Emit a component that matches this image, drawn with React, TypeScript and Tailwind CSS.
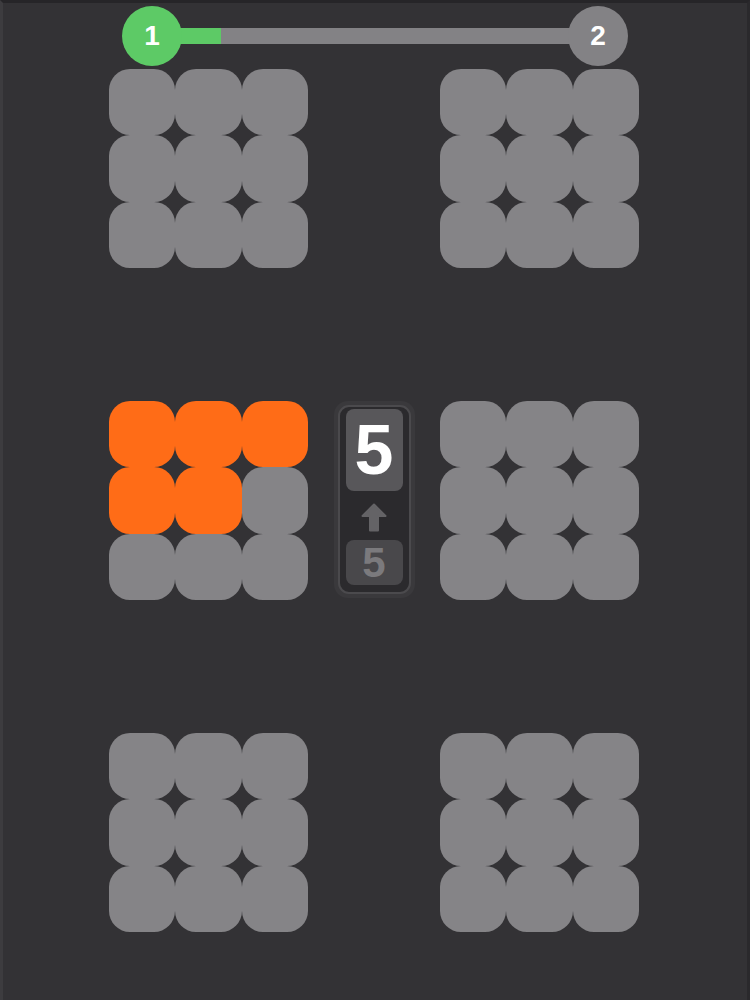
type Board = { orange: number[] };

// 3 x 3 layout of boards; index 4 is the counter in the middle gap
const boards: (Board | null)[] = [
    { orange: [] },
    null,
    { orange: [] },
    { orange: [0, 1, 2, 3, 4] },
    null,
    { orange: [] },
    { orange: [] },
    null,
    { orange: [] },
];

function Tile({ hot }: { hot: boolean }) {
    return (
        <div
            className={
                hot
                    ? "w-full h-full rounded-[21px] bg-[#ff6c17]"
                    : "w-full h-full rounded-[21px] bg-[#858487]"
            }
        />
    );
}

function Grid({ orange }: Board) {
    return (
        <div className="grid grid-cols-3 grid-rows-3 w-[199px] h-[199px]">
            {[...Array(9)].map((_, i) => (
                <Tile key={i} hot={orange.includes(i)} />
            ))}
        </div>
    );
}

function UpArrow() {
    return (
        <svg width="26" height="29" viewBox="0 0 26 29" className="mt-[12px] mb-[8px]">
            <path
                d="M13 1.5 L24.5 13 L17 13 L17 27.5 L9 27.5 L9 13 L1.5 13 Z"
                fill="#646366"
                stroke="#646366"
                strokeLinejoin="round"
                strokeWidth="2"
            />
        </svg>
    );
}

function Counter() {
    return (
        <div className="mx-auto w-[81px] h-[197px] rounded-[14px] bg-[#3a393c] p-[4px]">
            <div className="h-full rounded-[11px] border-2 border-[#4b4a4d] bg-[#2b2a2d] flex flex-col items-center pt-[2px]">
                <div className="w-[57px] h-[82px] rounded-[8px] bg-[#58575a] flex items-center justify-center">
                    <span className="text-[70px] leading-none font-bold text-white">5</span>
                </div>
                <UpArrow />
                <div className="w-[57px] h-[45px] rounded-[8px] bg-[#49484b] flex items-center justify-center">
                    <span className="text-[42px] leading-none font-bold text-[#7b7a7d]">5</span>
                </div>
            </div>
        </div>
    );
}

export default function App() {
    return (
        <div
            className="w-[750px] h-[1000px] overflow-hidden bg-[#333235] border-t-[3px] border-t-[#262528] border-l-[3px] border-l-[#3d3c3f] border-r-[3px] border-r-[#2a292c]"
            style={{ fontFamily: '"Liberation Sans", Arial, sans-serif' }}
        >
            <div className="flex items-center pl-[119px] pt-[2px] h-[64px]">
                <div className="relative z-10 w-[60px] h-[60px] rounded-full bg-[#5dca66] flex items-center justify-center text-white text-[28px] font-bold">
                    1
                </div>
                <div className="-mx-[6px] w-[398px] h-[16px] bg-[#838285] flex">
                    <div className="w-[45px] h-full bg-[#5dca66]" />
                </div>
                <div className="relative z-10 w-[60px] h-[60px] rounded-full bg-[#838285] flex items-center justify-center text-white text-[28px] font-bold">
                    2
                </div>
            </div>
            <div className="grid grid-cols-[199px_132px_199px] gap-y-[133px] pl-[106px] pt-[2px]">
                {boards.map((b, i) =>
                    i === 4 ? (
                        <Counter key={i} />
                    ) : b ? (
                        <Grid key={i} orange={b.orange} />
                    ) : (
                        <div key={i} />
                    )
                )}
            </div>
        </div>
    );
}
